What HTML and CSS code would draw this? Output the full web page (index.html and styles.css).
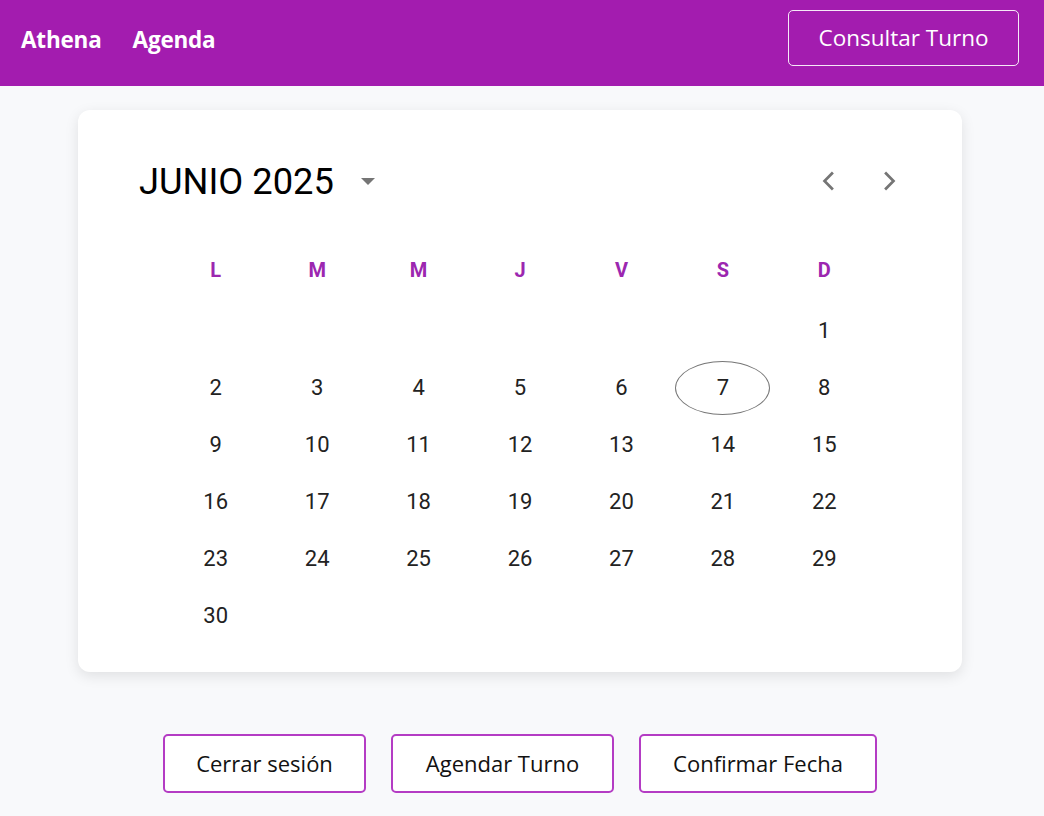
FILE: index.html
```html
<!DOCTYPE html>
<html lang="es">
<head>
<meta charset="utf-8">
<title>Athena Agenda</title>
<link rel="stylesheet" href="styles.css">
</head>
<body>
<header class="topbar">
  <nav class="brand">
    <span class="brand-link">Athena</span>
    <span class="brand-link">Agenda</span>
  </nav>
  <button class="outline-btn">Consultar Turno</button>
</header>
<main class="content">
  <section class="card">
    <div class="cal-head">
      <div class="month">
        <span class="month-label">JUNIO 2025</span>
        <svg class="caret" width="16" height="8" viewBox="0 0 16 8"><path d="M1 0 L15 0 L8 7 Z" fill="#757575"/></svg>
      </div>
      <div class="arrows">
        <svg class="arrow" width="36" height="36" viewBox="0 0 24 24"><polyline points="14.6,6.3 9,12 14.6,17.7" fill="none" stroke="#757575" stroke-width="1.8"/></svg>
        <svg class="arrow" width="36" height="36" viewBox="0 0 24 24"><polyline points="9.4,6.3 15,12 9.4,17.7" fill="none" stroke="#757575" stroke-width="1.8"/></svg>
      </div>
    </div>
    <div class="grid">
      <div class="wd">L</div><div class="wd">M</div><div class="wd">M</div><div class="wd">J</div><div class="wd">V</div><div class="wd">S</div><div class="wd">D</div>
      <div class="day"></div><div class="day"></div><div class="day"></div><div class="day"></div><div class="day"></div><div class="day"></div><div class="day">1</div>
      <div class="day">2</div><div class="day">3</div><div class="day">4</div><div class="day">5</div><div class="day">6</div><div class="day"><span class="sel">7</span></div><div class="day">8</div>
      <div class="day">9</div><div class="day">10</div><div class="day">11</div><div class="day">12</div><div class="day">13</div><div class="day">14</div><div class="day">15</div>
      <div class="day">16</div><div class="day">17</div><div class="day">18</div><div class="day">19</div><div class="day">20</div><div class="day">21</div><div class="day">22</div>
      <div class="day">23</div><div class="day">24</div><div class="day">25</div><div class="day">26</div><div class="day">27</div><div class="day">28</div><div class="day">29</div>
      <div class="day">30</div>
    </div>
  </section>
  <div class="actions">
    <button class="act-btn">Cerrar sesión</button>
    <button class="act-btn">Agendar Turno</button>
    <button class="act-btn">Confirmar Fecha</button>
  </div>
</main>
</body>
</html>
```

FILE: styles.css
```css
* { box-sizing: border-box; }
html, body { margin: 0; padding: 0; }
body {
  background: #f8f9fb;
  font-family: "Open Sans", "Noto Sans", sans-serif;
  width: 1044px;
  height: 816px;
  overflow: hidden;
}
.topbar {
  height: 86px;
  background: #a31caf;
  display: flex;
  align-items: flex-start;
  justify-content: space-between;
  padding: 0 25px 0 21px;
}
.brand { display: flex; gap: 31px; margin-top: 23px; }
.brand-link {
  color: #fff;
  font-weight: 700;
  font-size: 22.5px;
  line-height: 34px;
  letter-spacing: -0.2px;
}
.outline-btn {
  background: transparent;
  border: 1px solid rgba(255,255,255,0.9);
  border-radius: 5px;
  color: #fff;
  font-family: "Open Sans", sans-serif;
  font-size: 22.5px;
  width: 231px;
  height: 56px;
  margin-top: 10px;
  padding: 0 0 2px;
}
.content {
  padding-top: 24px;
  display: flex;
  flex-direction: column;
  align-items: center;
}
.card {
  width: 884px;
  height: 562px;
  margin-right: 4px;
  background: #fff;
  border-radius: 12px;
  box-shadow: 0 4px 14px rgba(0,0,0,0.10);
  padding: 51px 55px 0 61px;
}
.cal-head {
  display: flex;
  justify-content: space-between;
  align-items: center;
  height: 40px;
}
.month { display: flex; align-items: center; gap: 26px; }
.month-label {
  font-family: Roboto, sans-serif;
  font-size: 36.3px;
  color: #000;
}
.caret { margin-top: 2px; }
.arrows { display: flex; gap: 24px; }
.grid {
  width: 710px;
  margin: 49px 0 0 26px;
  display: grid;
  grid-template-columns: repeat(7, 1fr);
  grid-template-rows: 52px;
  grid-auto-rows: 57px;
  font-family: Roboto, sans-serif;
}
.grid .wd {
  height: 40px;
  align-self: start;
  display: flex;
  align-items: center;
  justify-content: center;
  color: #9c27b0;
  font-weight: 700;
  font-size: 20px;
}
.day {
  display: flex;
  align-items: center;
  justify-content: center;
  font-size: 22px;
  color: #222;
  height: 57px;
}
.sel {
  width: 95px;
  height: 54px;
  border: 1px solid #777;
  border-radius: 50%;
  display: flex;
  align-items: center;
  justify-content: center;
}
.actions {
  margin-top: 62px;
  display: flex;
  gap: 25px;
  margin-right: 4px;
}
.act-btn {
  height: 59px;
  background: #fff;
  border: 2px solid #b43cc4;
  border-radius: 5px;
  font-family: "Open Sans", sans-serif;
  font-size: 22px;
  color: #111;
  padding: 0 0 2px;
}
.act-btn:nth-child(1) { width: 203px; }
.act-btn:nth-child(2) { width: 223px; }
.act-btn:nth-child(3) { width: 238px; }
```
